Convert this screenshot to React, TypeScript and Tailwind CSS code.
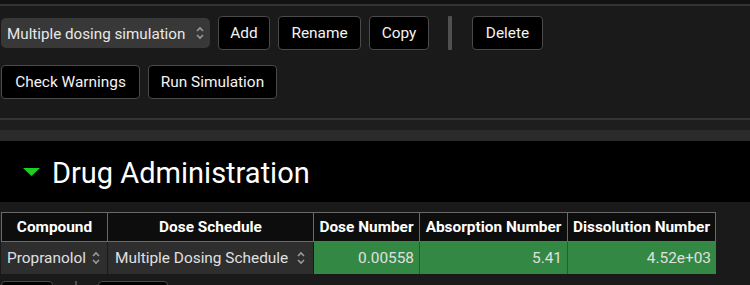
import React from "react";

const font = { fontFamily: "Roboto, 'Liberation Sans', sans-serif" };

function UpDown({ className = "" }: { className?: string }) {
  return (
    <svg width="8" height="14" viewBox="0 0 8 14" className={className}>
      <path d="M1 5 L4 2 L7 5" fill="none" stroke="#9a9a9a" strokeWidth="1.6" />
      <path d="M1 9 L4 12 L7 9" fill="none" stroke="#9a9a9a" strokeWidth="1.6" />
    </svg>
  );
}

function Btn({ children, w }: { children: React.ReactNode; w: string }) {
  return (
    <button
      className={`h-[34px] ${w} rounded-[4px] border border-[#4a4a4a] bg-black text-[15.4px] text-[#f4f4f4] flex items-center justify-center pt-[2px]`}
    >
      {children}
    </button>
  );
}

export default function App() {
  return (
    <div className="w-[750px] h-[285px] overflow-hidden bg-[#1a1a1a]" style={font}>
      <div className="h-[4px] bg-[#121212]" />
      <div className="h-[2px] bg-[#333333]" />
      <div className="pl-[1px] pt-[10px]">
        <div className="flex items-center h-[34px]">
          <div className="w-[209px] h-[30px] rounded-[5px] bg-[#383838] flex items-center justify-between pl-[6px] pr-[6px] text-[15.2px] text-[#e8e8e8]">
            <span className="pt-[2px]">Multiple dosing simulation</span>
            <UpDown />
          </div>
          <div className="ml-[8px]"><Btn w="w-[52px]">Add</Btn></div>
          <div className="ml-[8px]"><Btn w="w-[83px]">Rename</Btn></div>
          <div className="ml-[8px]"><Btn w="w-[60px]">Copy</Btn></div>
          <div className="ml-[19px] w-[4px] h-[34px] bg-[#505050] rounded-[1px]" />
          <div className="ml-[20px]"><Btn w="w-[71px]">Delete</Btn></div>
        </div>
        <div className="flex items-center h-[34px] mt-[15px]">
          <Btn w="w-[139px]">Check Warnings</Btn>
          <div className="ml-[8px]"><Btn w="w-[129px]">Run Simulation</Btn></div>
        </div>
      </div>
      <div className="h-[19px]" />
      <div className="h-[2px] bg-[#333333]" />
      <div className="h-[10px] bg-[#1e1e1e]" />
      <div className="h-[11px] bg-[#2b2b2b]" />
      <div className="h-[61px] bg-black flex items-center pl-[23px]">
        <svg width="17" height="8" viewBox="0 0 17 8">
          <path d="M0 0 L17 0 L8.5 8 Z" fill="#1ed01e" />
        </svg>
        <span className="ml-[12px] text-[29px] text-white leading-none pt-[4px]">Drug Administration</span>
      </div>
      <div className="h-[10px]" />
      <div className="pl-[1px]">
        <div className="flex h-[30px] text-[15.4px] font-bold text-white">
          <div className="w-[107px] border border-[#6a6a6a] bg-[#0d0d0d] flex items-center justify-center pt-[2px]">Compound</div>
          <div className="w-[206px] border border-l-0 border-[#6a6a6a] bg-[#0d0d0d] flex items-center justify-center pt-[2px]">Dose Schedule</div>
          <div className="w-[106px] border border-l-0 border-[#6a6a6a] bg-[#0d0d0d] flex items-center justify-center pt-[2px]">Dose Number</div>
          <div className="w-[148px] border border-l-0 border-[#6a6a6a] bg-[#0d0d0d] flex items-center justify-center pt-[2px]">Absorption Number</div>
          <div className="w-[148px] border border-l-0 border-[#6a6a6a] bg-[#0d0d0d] flex items-center justify-center pt-[2px]">Dissolution Number</div>
        </div>
        <div className="flex h-[32px] text-[15.4px] text-[#e0e0e0]">
          <div className="w-[107px] bg-[#2e2e2e] border-r border-[#1a1a1a] flex items-center justify-between pl-[6px] pr-[7px]">
            <span className="pt-[2px]">Propranolol</span>
            <UpDown />
          </div>
          <div className="w-[206px] bg-[#2e2e2e] border-r border-[#1a1a1a] flex items-center justify-between pl-[7px] pr-[8px]">
            <span className="pt-[2px]">Multiple Dosing Schedule</span>
            <UpDown />
          </div>
          <div className="w-[106px] bg-[#338844] border-r border-[#2a5a34] flex items-center justify-end pr-[5px] pt-[2px]">0.00558</div>
          <div className="w-[148px] bg-[#338844] border-r border-[#2a5a34] flex items-center justify-end pr-[5px] pt-[2px]">5.41</div>
          <div className="w-[148px] bg-[#338844] flex items-center justify-end pr-[5px] pt-[2px]">4.52e+03</div>
        </div>
      </div>
      <div className="flex items-start pt-[7px] pl-[1px]">
        <div className="w-[52px] h-[20px] rounded-[4px] border border-[#4a4a4a] bg-black" />
        <div className="ml-[22px] w-[2px] h-[20px] bg-[#505050]" />
        <div className="ml-[21px] w-[70px] h-[20px] rounded-[4px] border border-[#4a4a4a] bg-black" />
      </div>
    </div>
  );
}
